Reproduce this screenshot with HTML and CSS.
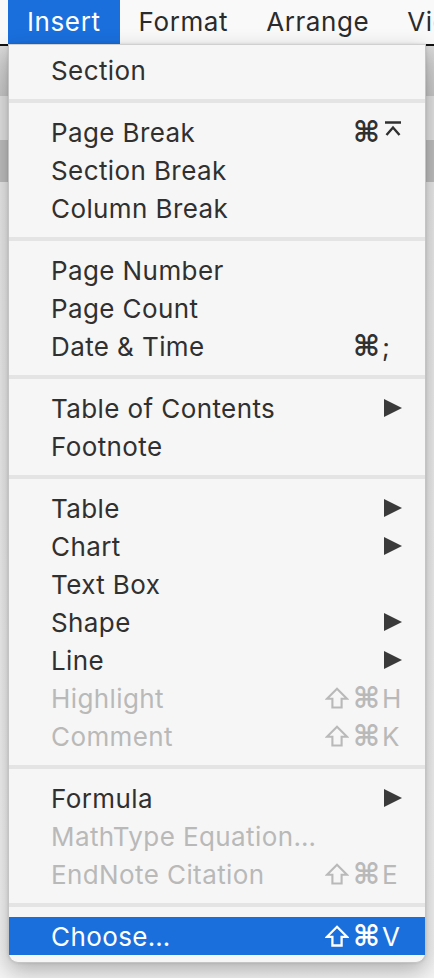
FILE: index.html
```html
<!DOCTYPE html>
<html>
<head>
<meta charset="utf-8">
<link rel="stylesheet" href="styles.css">
</head>
<body>
<div class="screen">
  <div class="menubar">
    <div class="mb-item active">Insert</div>
    <div class="mb-item">Format</div>
    <div class="mb-item">Arrange</div>
    <div class="mb-item">View</div>
  </div>
  <div class="backdrop">
    <div class="band b1"></div>
    <div class="band b2"></div>
    <div class="band b3"></div>
    <div class="band b4"></div>
  </div>

  <div class="menu">
    <div class="item"><span class="label">Section</span></div>
    <div class="sep"></div>
    <div class="item"><span class="label">Page Break</span><span class="sc"><span class="mods">⌘</span><span class="key"><svg class="enter" viewBox="0 0 18 18" width="18" height="18"><path d="M1 1.5H17M2.5 14L9 6.5L15.5 14" fill="none" stroke="currentColor" stroke-width="2.4"/></svg></span></span></div>
    <div class="item"><span class="label">Section Break</span></div>
    <div class="item"><span class="label">Column Break</span></div>
    <div class="sep"></div>
    <div class="item"><span class="label">Page Number</span></div>
    <div class="item"><span class="label">Page Count</span></div>
    <div class="item"><span class="label">Date &amp; Time</span><span class="sc"><span class="mods">⌘</span><span class="key">;</span></span></div>
    <div class="sep"></div>
    <div class="item"><span class="label">Table of Contents</span><span class="arrow"></span></div>
    <div class="item"><span class="label">Footnote</span></div>
    <div class="sep"></div>
    <div class="item"><span class="label">Table</span><span class="arrow"></span></div>
    <div class="item"><span class="label">Chart</span><span class="arrow"></span></div>
    <div class="item"><span class="label">Text Box</span></div>
    <div class="item"><span class="label">Shape</span><span class="arrow"></span></div>
    <div class="item"><span class="label">Line</span><span class="arrow"></span></div>
    <div class="item disabled"><span class="label">Highlight</span><span class="sc"><svg class="shift" viewBox="0 0 24 22" width="24" height="22"><path d="M12 1.8L22 11.8H16.6V20.5H7.4V11.8H2Z" fill="none" stroke="currentColor" stroke-width="2.1" stroke-linejoin="miter"/></svg><span class="mods">⌘</span><span class="key">H</span></span></div>
    <div class="item disabled"><span class="label">Comment</span><span class="sc"><svg class="shift" viewBox="0 0 24 22" width="24" height="22"><path d="M12 1.8L22 11.8H16.6V20.5H7.4V11.8H2Z" fill="none" stroke="currentColor" stroke-width="2.1" stroke-linejoin="miter"/></svg><span class="mods">⌘</span><span class="key">K</span></span></div>
    <div class="sep"></div>
    <div class="item"><span class="label">Formula</span><span class="arrow"></span></div>
    <div class="item disabled"><span class="label">MathType Equation…</span></div>
    <div class="item disabled"><span class="label">EndNote Citation</span><span class="sc"><svg class="shift" viewBox="0 0 24 22" width="24" height="22"><path d="M12 1.8L22 11.8H16.6V20.5H7.4V11.8H2Z" fill="none" stroke="currentColor" stroke-width="2.1" stroke-linejoin="miter"/></svg><span class="mods">⌘</span><span class="key">E</span></span></div>
    <div class="sep"></div>
    <div class="item selected"><span class="label">Choose…</span><span class="sc"><svg class="shift" viewBox="0 0 24 22" width="24" height="22"><path d="M12 1.8L22 11.8H16.6V20.5H7.4V11.8H2Z" fill="none" stroke="currentColor" stroke-width="2.3" stroke-linejoin="miter"/></svg><span class="mods">⌘</span><span class="key">V</span></span></div>
  </div>
</div>
</body>
</html>
```

FILE: styles.css
```css
* { box-sizing: border-box; }
html, body {
  margin: 0;
  padding: 0;
}
body {
  width: 434px;
  height: 978px;
  overflow: hidden;
  background: #f2f2f2;
  font-family: "Inter", "Noto Sans", sans-serif;
}
.screen {
  position: relative;
  width: 434px;
  height: 978px;
  overflow: hidden;
}
.menubar {
  height: 46px;
  background: #f9f9f9;
  border-bottom: 2px solid #111;
  display: flex;
  padding-left: 8px;
  white-space: nowrap;
}
.mb-item {
  height: 44px;
  padding: 0 19px;
  font-size: 26px;
  letter-spacing: 0.6px;
  line-height: 44px;
  color: #2b2b2b;
}
.mb-item.active {
  background: #1a6fdd;
  color: #fff;
}
.backdrop {
  display: flex;
  flex-direction: column;
}
.band { width: 100%; }
.b1 { height: 50px; background: linear-gradient(#dadada, #c6c6c6); }
.b2 { height: 44px; background: #e1e1e1; }
.b3 { height: 42px; background: #bebebe; }
.b4 { height: 796px; background: linear-gradient(#e8e8e8, #f4f4f4); }

.menu {
  position: absolute;
  left: 8px;
  top: 44px;
  width: 418px;
  background: #f6f6f6;
  border: 1px solid #c4c4c4;
  border-top: 1px solid #d0d0d0;
  border-radius: 0 0 10px 10px;
  padding: 6px 0 7px;
  box-shadow: 0 8px 22px rgba(0,0,0,0.28), 0 0 3px rgba(0,0,0,0.12);
  color: #303030;
  font-size: 26px;
  letter-spacing: 0.4px;
}
.item {
  height: 38px;
  display: flex;
  align-items: center;
  padding: 0 23px 0 42px;
  white-space: nowrap;
}
.label { flex: 1; }
.disabled { color: #b9b9b9; }
.selected { background: #1a6fdd; color: #fff; }
.sep {
  height: 24px;
  display: flex;
  align-items: center;
}
.sep::before {
  content: "";
  display: block;
  width: 100%;
  height: 4px;
  background: #e4e4e4;
}
.sc {
  display: flex;
  align-items: center;
}
.shift {
  display: block;
  margin-right: 4px;
  margin-top: -1px;
}
.mods {
  font-family: "DejaVu Sans", sans-serif;
  font-size: 29px;
  font-weight: bold;
  line-height: 30px;
  margin-right: 2px;
  letter-spacing: 0;
}
.key {
  width: 20px;
  display: flex;
  align-items: center;
}
.enter { display: block; margin-left: 2px; margin-top: -4px; }
.arrow {
  width: 0;
  height: 0;
  border-top: 9.5px solid transparent;
  border-bottom: 9.5px solid transparent;
  border-left: 18px solid #3a3a3a;
}
```
